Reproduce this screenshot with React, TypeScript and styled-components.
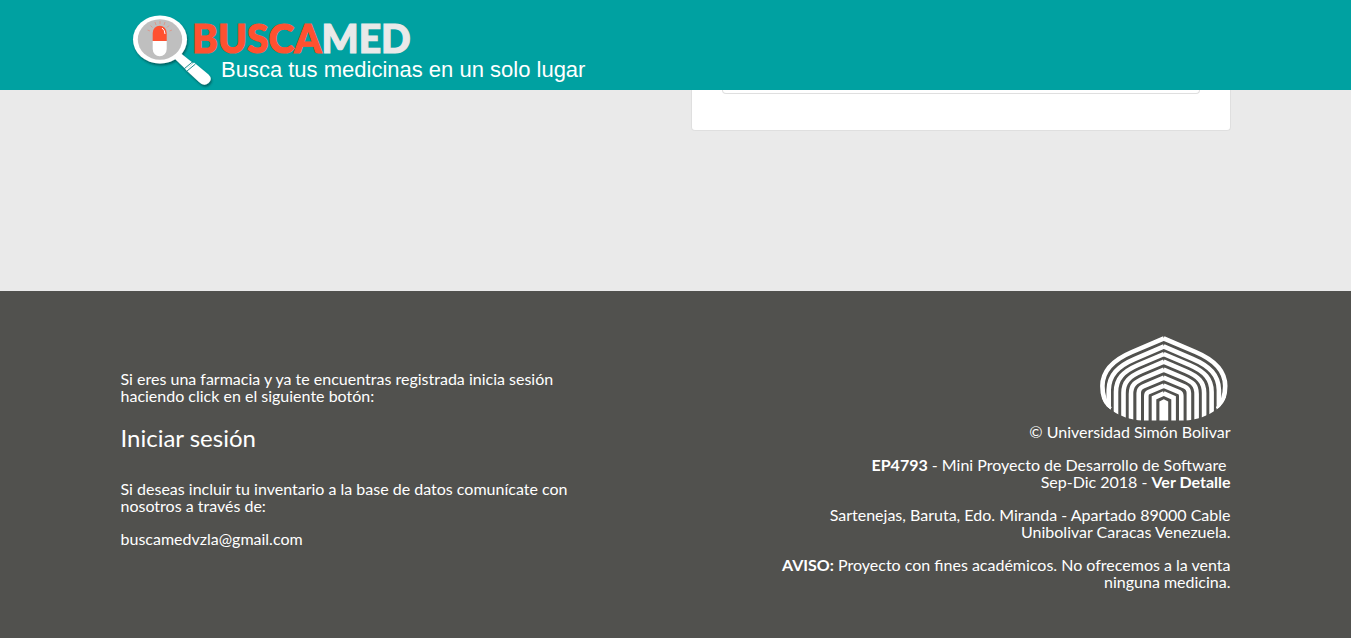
import React from 'react';
import styled, { createGlobalStyle } from 'styled-components';

const GlobalStyle = createGlobalStyle`
  *, *::before, *::after { box-sizing: border-box; }
  body {
    margin: 0;
    background: #eaeaea;
    color: #fff;
    font-family: Lato, 'Open Sans', sans-serif;
    font-size: 16px;
    line-height: 17px;
  }
`;

const Container = styled.div`
  width: 100%;
  max-width: 1140px;
  margin: 0 auto;
  padding: 0 15px;
`;

const Header = styled.header`
  height: 90px;
  background: #00a1a1;
`;

const HomeLink = styled.a`
  display: block;
  width: 480px;
  max-width: 100%;
  height: 90px;
  color: #fff;
  text-decoration: none;

  svg { display: block; }
`;

const Main = styled.main`
  padding-bottom: 160px;
`;

const Split = styled(Container)`
  display: flex;
  justify-content: flex-end;
`;

const Card = styled.section`
  width: 540px;
  max-width: 100%;
  padding: 0 30px 36px;
  background: #fff;
  border: 1px solid #dfdfdf;
  border-top: 0;
  border-radius: 0 0 4px 4px;
`;

const ResultBox = styled.div`
  height: 4px;
  border: 1px solid #dfdfdf;
  border-top: 0;
  border-radius: 0 0 4px 4px;
`;

const Footer = styled.footer`
  min-height: 347px;
  padding-bottom: 30px;
  background: #51514e;
`;

const Columns = styled(Container)`
  display: flex;
  flex-wrap: wrap;
  justify-content: space-between;
`;

const Column = styled.div<{ $top: number; $align?: 'left' | 'right' }>`
  width: 460px;
  max-width: 100%;
  padding-top: ${(p) => p.$top}px;
  text-align: ${(p) => p.$align ?? 'left'};
`;

const Text = styled.p`
  margin: 0 0 16px;
`;

const TextLink = styled.a`
  color: inherit;
  text-decoration: none;
`;

const LoginButton = styled.button`
  display: block;
  margin: 0 0 24px;
  padding: 0;
  border: 0;
  background: none;
  color: inherit;
  font: 24px/36px Lato, 'Open Sans', sans-serif;
  cursor: pointer;
`;

const Emblem = styled.svg`
  display: block;
  margin: 0 3px 2px auto;
`;

function BrandLogo() {
  return (
    <svg width="480" height="90" viewBox="121 0 480 90" role="img" aria-label="Buscamed">
      <defs>
        <filter id="shade" x="-20%" y="-20%" width="150%" height="150%">
          <feDropShadow dx="1" dy="2" stdDeviation="1.2" floodColor="#003838" floodOpacity="0.6" />
        </filter>
      </defs>
      <g filter="url(#shade)">
        <path d="M174 58 L181 53.500 L193 63 L186 69.500 Z" fill="#fff" />
        <path d="M185.500 69.500 L194 62.500 L208.500 74.500 Q213 79 208.500 83 Q204 87 199 82 Z" fill="#fff" />
        <ellipse cx="160" cy="39.500" rx="27" ry="24" fill="#fff" />
      </g>
      <path d="M184.500 68.500 L193 61.500 M187 71 L195.500 64" stroke="#0b8080" strokeWidth="0.900" />
      <ellipse cx="160" cy="39.500" rx="22.200" ry="20.300" fill="#bfbfbf" />
      <path d="M152.700 41 V33 a7 7.300 0 0 1 14 0 V41 Z" fill="#ff5130" />
      <path d="M152.700 41 H166.700 V49 a7 7.300 0 0 1 -14 0 Z" fill="#fff" />
      <path d="M162 28 Q165 30 165 34" stroke="#fff" strokeWidth="1" fill="none" />
      <path
        d="M150 31 l-2.500 -1 M152.500 27.500 l-2 -2 M156 25 l-1 -3 M160 24 v-3 M164 25 l1 -3 M167 27.500 l2 -2 M169.500 31 l2.500 -1"
        stroke="#e58a78"
        strokeWidth="0.700"
      />
      <g fontFamily="Lato, sans-serif" fontWeight="900" fontSize="39" strokeWidth="1.200">
        <text x="192" y="53" fill="#ff5130" stroke="#ff5130">
          BUSCA<tspan fill="#e9e9e9" stroke="#e9e9e9">MED</tspan>
        </text>
      </g>
      <text x="221" y="77" fontFamily="'Liberation Sans', Arial, sans-serif" fontSize="22" fill="#fff">
        Busca tus medicinas en un solo lugar
      </text>
    </svg>
  );
}

function UniversityEmblem() {
  return (
    <Emblem width="128" height="85" viewBox="0 0 128 85" role="img" aria-label="Universidad Simón Bolívar">
      <defs>
        <clipPath id="dome">
          <path d="M-1 -1 H129 V52 C127 62 123 69 117 73 C108 80 97 84 84 84.500 H43 C30 84 19 80 10 73 C4 69 0 62 -1 52 Z" />
        </clipPath>
        <g id="arches" fill="none" stroke="#fff" strokeWidth="4.600">
          <path d="M64 2.300 L32 16 C13 24 2.400 35 2.400 50 C2.400 60 5 67 10 73" />
          <path d="M64 10.300 L35 22.800 C18 30 9 39 8.700 54 V85" />
          <path d="M64 18 L38 29 C23 35.500 16 43 16 56 V85" />
          <path d="M64 25.700 L42 35 C29 40.500 23.500 46 23.500 57 V85" />
          <path d="M64 33.600 L44 42 C35 46 31 49 31 58 V85" />
          <path d="M64 41.700 L43 50.500 Q38.700 52.500 38.700 57 V85" />
          <path d="M64 49.600 L48.500 56 Q46.300 57 46.300 60 V85" />
          <path d="M64 57.300 L54 61.800 V85" />
        </g>
      </defs>
      <g clipPath="url(#dome)">
        <use href="#arches" />
        <use href="#arches" transform="translate(127.600 0) scale(-1 1)" />
        <path d="M59.400 85 V65.500 L63.800 63.300 L68.200 65.500 V85 Z" fill="#fff" />
      </g>
    </Emblem>
  );
}

export default function App() {
  return (
    <>
      <GlobalStyle />
      <Header>
        <Container>
          <HomeLink href="#"><BrandLogo /></HomeLink>
        </Container>
      </Header>
      <Main>
        <Split>
          <Card><ResultBox /></Card>
        </Split>
      </Main>
      <Footer>
        <Columns>
          <Column $top={79}>
            <Text>Si eres una farmacia y ya te encuentras registrada inicia sesión haciendo click en el siguiente botón:</Text>
            <LoginButton type="button">Iniciar sesión</LoginButton>
            <Text>Si deseas incluir tu inventario a la base de datos comunícate con nosotros a través de:</Text>
            <Text><TextLink href="mailto:buscamedvzla@gmail.com">buscamedvzla@gmail.com</TextLink></Text>
          </Column>
          <Column $top={45} $align="right">
            <UniversityEmblem />
            <Text>© Universidad Simón Bolivar</Text>
            <Text>
              <b>EP4793</b> - Mini Proyecto de Desarrollo de Software&nbsp;<br />
              Sep-Dic 2018 - <TextLink href="#"><b>Ver Detalle</b></TextLink>
            </Text>
            <Text>Sartenejas, Baruta, Edo. Miranda - Apartado 89000 Cable Unibolivar Caracas Venezuela.</Text>
            <Text><b>AVISO:</b> Proyecto con fines académicos. No ofrecemos a la venta ninguna medicina.</Text>
          </Column>
        </Columns>
      </Footer>
    </>
  );
}
